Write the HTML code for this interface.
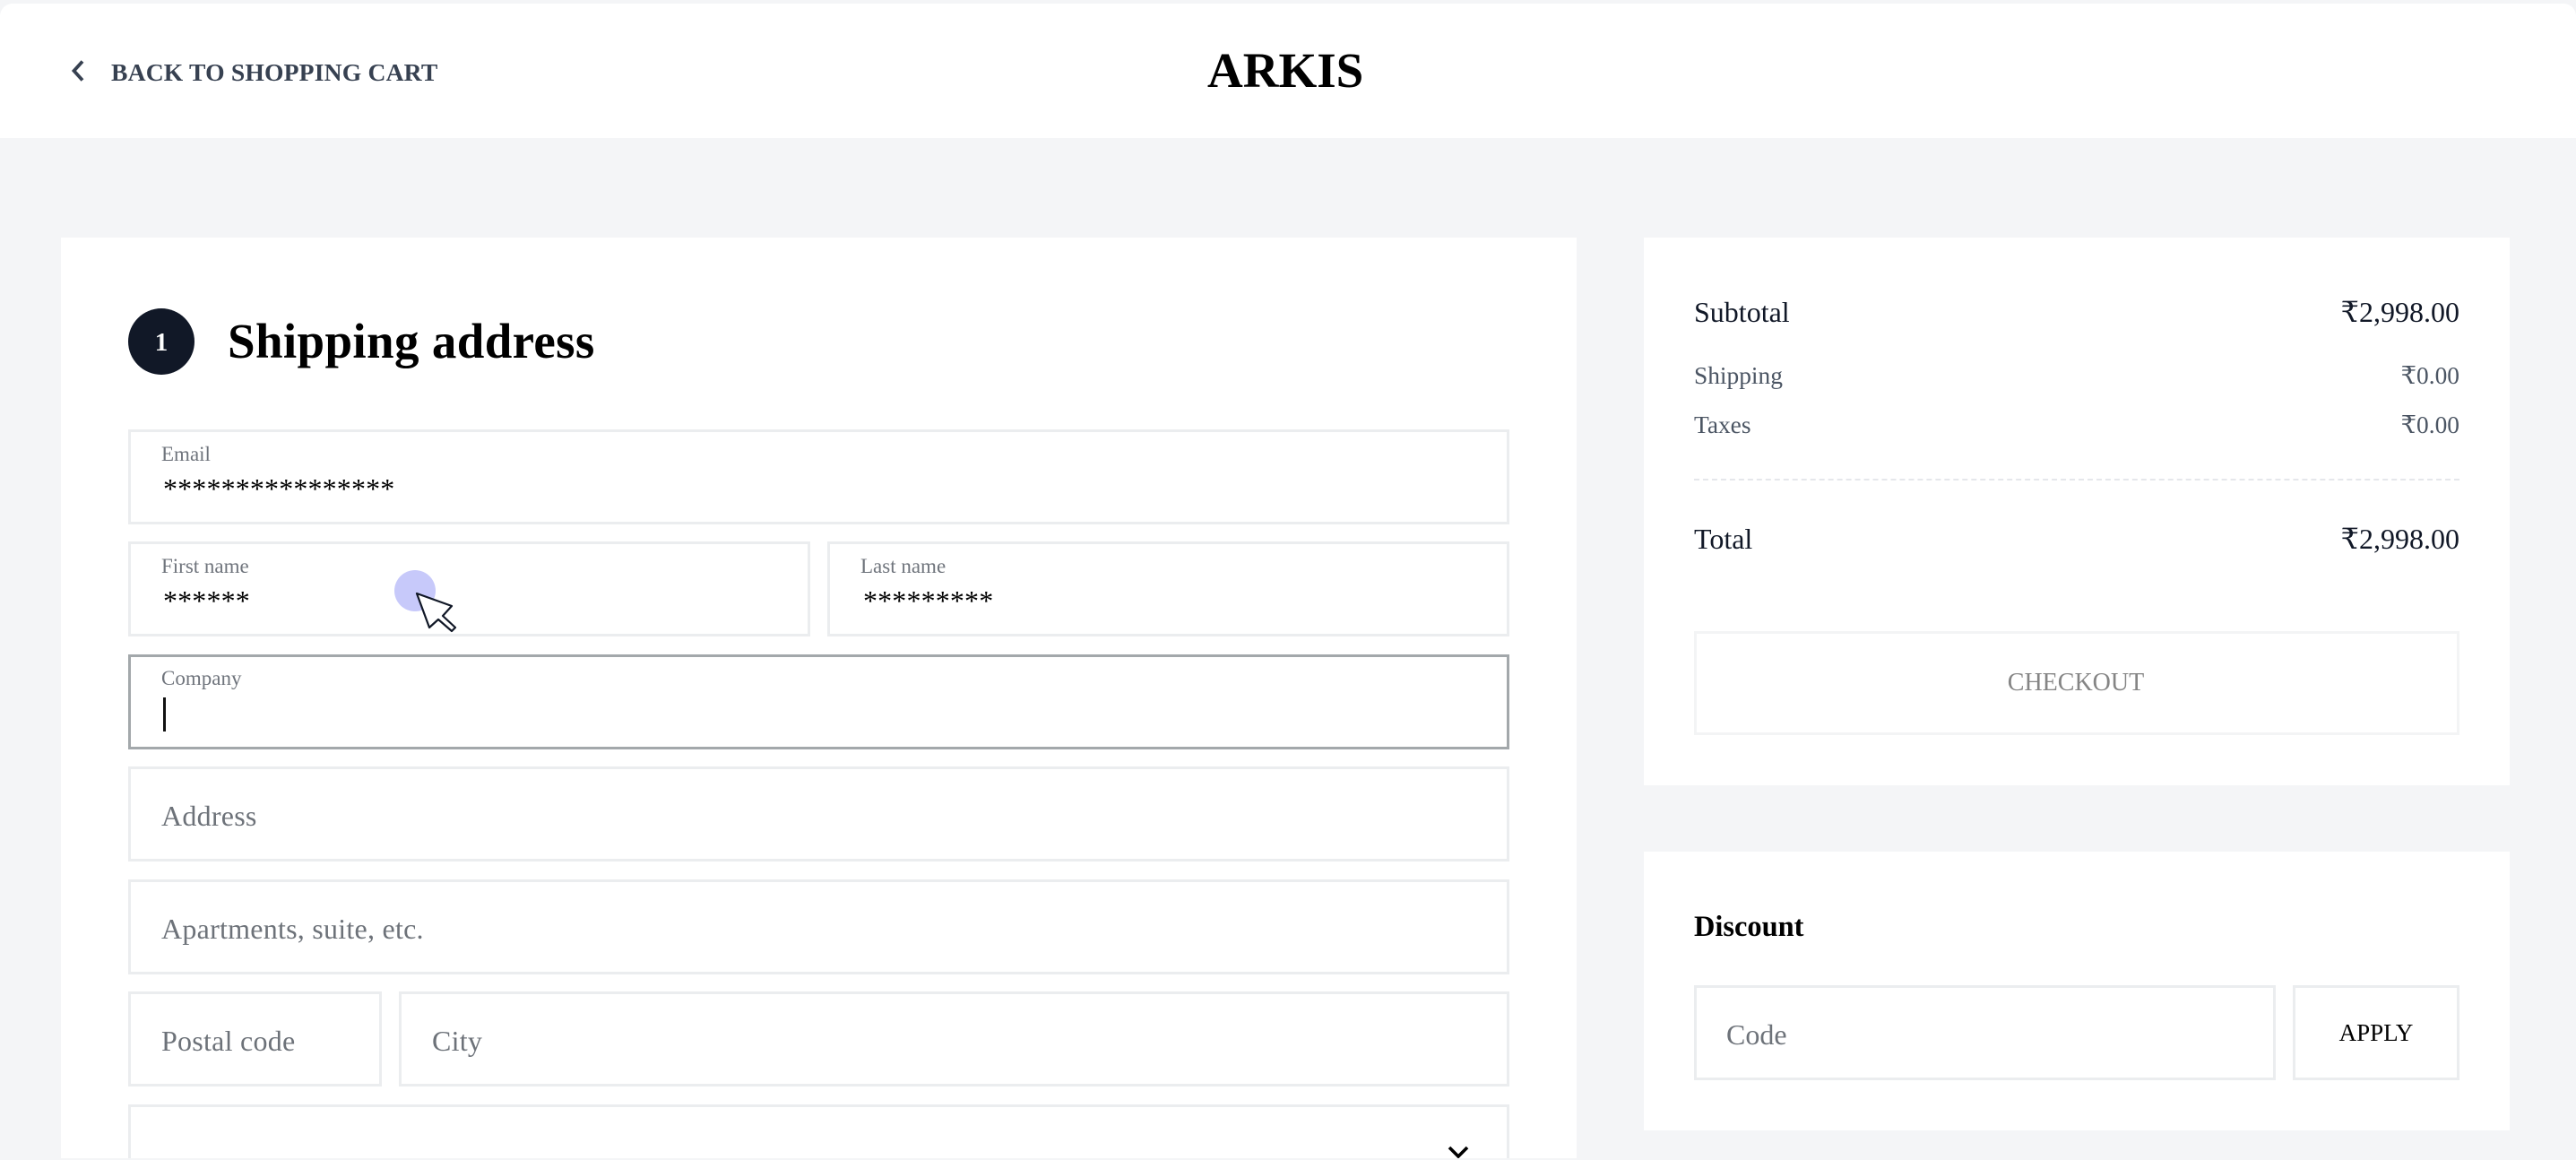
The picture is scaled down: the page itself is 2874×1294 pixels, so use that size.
<!DOCTYPE html>
<html lang="en">
<head>
<meta charset="utf-8">
<title>Checkout</title>
<style>
html,body{margin:0;padding:0;width:2874px;height:1294px;overflow:hidden;background:#f4f5f7}
body{position:relative;font-family:"Liberation Serif","DejaVu Serif",serif;color:#000}
.b{position:absolute;box-sizing:border-box}
.t{position:absolute;line-height:1;white-space:nowrap}
.card{position:absolute;background:#fff}
.f{position:absolute;box-sizing:border-box;border:3px solid #ebedef;background:#fff}
.lab{font-size:23px;color:#6f747c}
.ast{font-size:32px;color:#000;letter-spacing:.15px}
.ph{font-size:32px;color:#6d7279;letter-spacing:.25px}
.r{text-align:right;right:130px}
.lg{font-size:32px;color:#111827}
.sm{font-size:27.4px;color:#4b5563}
</style>
</head>
<body>
<div class="card" style="left:0;top:4px;width:2874px;height:150px;border-top-left-radius:14px;border-top-right-radius:14px"></div>
<svg class="b" style="left:79px;top:66px" width="16" height="26" viewBox="0 0 16 26"><path d="M13 2.500L3.500 13L13 23.500" fill="none" stroke="#374151" stroke-width="3.800"/></svg>
<div class="t" style="left:124px;top:67px;font-size:27.6px;font-weight:bold;color:#374151;letter-spacing:.18px">BACK TO SHOPPING CART</div>
<div class="t" style="left:1347px;top:51px;font-size:55px;font-weight:bold">ARKIS</div>

<div class="card" style="left:68px;top:265px;width:1691px;height:1027px"></div>
<div class="b" style="left:143px;top:344px;width:74px;height:74px;border-radius:50%;background:#111827"></div>
<div class="t" style="left:143px;width:74px;text-align:center;top:368px;font-size:29px;font-weight:bold;color:#fff">1</div>
<div class="t" style="left:254px;top:353px;font-size:55px;font-weight:bold;letter-spacing:.35px">Shipping address</div>

<div class="f" style="left:143px;top:479px;width:1541px;height:106px"></div>
<div class="t lab" style="left:180px;top:495px">Email</div>
<div class="t ast" style="left:182px;top:529px">****************</div>

<div class="f" style="left:143px;top:604px;width:761px;height:106px"></div>
<div class="t lab" style="left:180px;top:620px">First name</div>
<div class="t ast" style="left:182px;top:654px">******</div>

<div class="f" style="left:923px;top:604px;width:761px;height:106px"></div>
<div class="t lab" style="left:960px;top:620px">Last name</div>
<div class="t ast" style="left:963px;top:654px">*********</div>

<div class="f" style="left:143px;top:730px;width:1541px;height:106px;border:3px solid #a3a8ab"></div>
<div class="t lab" style="left:180px;top:745px">Company</div>
<div class="b" style="left:182px;top:778px;width:3px;height:38px;background:#111"></div>

<div class="f" style="left:143px;top:855px;width:1541px;height:106px"></div>
<div class="t ph" style="left:180px;top:894px">Address</div>
<div class="f" style="left:143px;top:981px;width:1541px;height:106px"></div>
<div class="t ph" style="left:180px;top:1020px">Apartments, suite, etc.</div>
<div class="f" style="left:143px;top:1106px;width:283px;height:106px"></div>
<div class="t ph" style="left:180px;top:1145px">Postal code</div>
<div class="f" style="left:445px;top:1106px;width:1239px;height:106px"></div>
<div class="t ph" style="left:482px;top:1145px">City</div>
<div class="f" style="left:143px;top:1232px;width:1541px;height:60px;border-bottom:0"></div>
<svg class="b" style="left:1614px;top:1276px" width="26" height="16" viewBox="0 0 26 16"><path d="M3 4L13 14L23 4" fill="none" stroke="#000" stroke-width="3.600"/></svg>

<div class="b" style="left:440px;top:636px;width:46px;height:46px;border-radius:50%;background:#c7c9fa"></div>
<svg class="b" style="left:460px;top:656px" width="54" height="54" viewBox="460 656 54 54"><path d="M465 662L504 676L494 687L508 700L504 704L489 691L479 700Z" fill="#fff" stroke="#111827" stroke-width="2.200" stroke-linejoin="round"/></svg>

<div class="card" style="left:1834px;top:265px;width:966px;height:611px"></div>
<div class="t lg" style="left:1890px;top:332px">Subtotal</div>
<div class="t lg r" style="top:332px">₹2,998.00</div>
<div class="t sm" style="left:1890px;top:406px">Shipping</div>
<div class="t sm r" style="top:406px">₹0.00</div>
<div class="t sm" style="left:1890px;top:461px">Taxes</div>
<div class="t sm r" style="top:461px">₹0.00</div>
<div class="b" style="left:1890px;top:534px;width:854px;height:0;border-top:2px dashed #e5e7eb"></div>
<div class="t lg" style="left:1890px;top:585px">Total</div>
<div class="t lg r" style="top:585px">₹2,998.00</div>
<div class="f" style="left:1890px;top:704px;width:854px;height:116px;border-color:#f3f4f5"></div>
<div class="t" style="left:1889px;width:854px;text-align:center;top:748px;font-size:28px;color:#858585">CHECKOUT</div>

<div class="card" style="left:1834px;top:950px;width:966px;height:311px"></div>
<div class="t" style="left:1890px;top:1018px;font-size:32.400px;font-weight:bold">Discount</div>
<div class="f" style="left:1890px;top:1099px;width:649px;height:106px"></div>
<div class="t" style="left:1926px;top:1138px;font-size:32px;color:#6d7279">Code</div>
<div class="f" style="left:2558px;top:1099px;width:186px;height:106px"></div>
<div class="t" style="left:2558px;width:186px;text-align:center;top:1139px;font-size:27px">APPLY</div>
</body>
</html>
